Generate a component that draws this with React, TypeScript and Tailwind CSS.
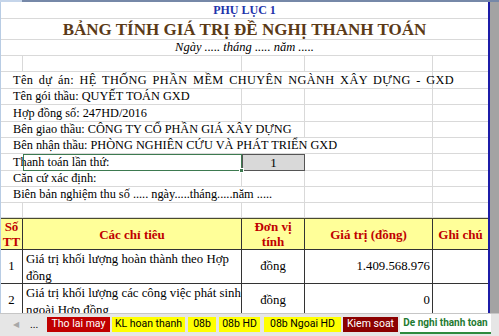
import React from 'react'

// column widths of the sheet: A, B, C, D, E
const COLS = 'grid grid-cols-[22px_219px_63px_128px_56px]'
const GRID = 'border-r border-b border-[#d9d9d9]'

type InfoRow = { text: string; span: number; h: string; wide?: boolean }

const INFO_ROWS: InfoRow[] = [
    { text: 'Tên dự án: HỆ THỐNG PHẦN MỀM CHUYÊN NGÀNH XÂY DỰNG - GXD', span: 4, h: 'h-[17px]', wide: true },
    { text: 'Tên gói thầu: QUYẾT TOÁN GXD', span: 2, h: 'h-[16px]' },
    { text: 'Hợp đồng số: 247HD/2016', span: 2, h: 'h-[17px]' },
    { text: 'Bên giao thầu: CÔNG TY CỔ PHẦN GIÁ XÂY DỰNG', span: 3, h: 'h-[16px]' },
    { text: 'Bên nhận thầu: PHÒNG NGHIÊN CỨU VÀ PHÁT TRIỂN GXD', span: 4, h: 'h-[16px]' },
]

const SPAN: Record<number, string> = {
    2: 'col-span-2',
    3: 'col-span-3',
    4: 'col-span-4',
    5: 'col-span-5',
}

// wrapped the same way the sheet wraps them
const ITEMS = [
    { no: '1', lines: ['Giá trị khối lượng hoàn thành theo Hợp', 'đồng'], value: '1.409.568.976' },
    { no: '2', lines: ['Giá trị khối lượng các công việc phát sinh', 'ngoài Hợp đồng'], value: '0' },
]

function TextRow({ text, span, h, wide }: InfoRow) {
    const rest = 5 - span
    return (
        <div className={`${COLS} ${h}`}>
            <div
                className={`${SPAN[span]} ${GRID} pl-[12px] flex items-center whitespace-nowrap leading-none ${
                    wide ? 'tracking-[0.4px] [word-spacing:2px]' : ''
                }`}
            >
                {text}
            </div>
            {Array.from({ length: rest }).map((_, i) => (
                <div key={i} className={GRID}></div>
            ))}
        </div>
    )
}

function EmptyRow({ h }: { h: string }) {
    return (
        <div className={`${COLS} ${h}`}>
            {[0, 1, 2, 3, 4].map(i => (
                <div key={i} className={GRID}></div>
            ))}
        </div>
    )
}

const TABS = [
    { label: 'Tho lai may', w: 'w-[63px]', ml: 'ml-0', cls: 'bg-[#c00000] text-white' },
    { label: 'KL hoan thanh', w: 'w-[73px]', ml: 'ml-[2px]', cls: 'bg-[#ffff00] text-black' },
    { label: '08b', w: 'w-[28px]', ml: 'ml-[3px]', cls: 'bg-[#ffff00] text-black' },
    { label: '08b HD', w: 'w-[41px]', ml: 'ml-[3px]', cls: 'bg-[#ffff00] text-black' },
    { label: '08b Ngoai HD', w: 'w-[77px]', ml: 'ml-[4px]', cls: 'bg-[#ffff00] text-black' },
    { label: 'Kiem soat', w: 'w-[55px]', ml: 'ml-[2px]', cls: 'bg-[#8b0000] text-white' },
]

export default function App() {
    return (
        <div className="w-[499px] h-[336px] overflow-hidden flex flex-col bg-white text-black font-['Liberation_Serif',serif] text-[12.3px]">
            {/* window top edge */}
            <div className="flex h-[2px] shrink-0">
                <div className="w-[22px] bg-[#c5d5ea]"></div>
                <div className="flex-1 bg-[#7688a8]"></div>
            </div>

            <div className="flex flex-1 min-h-0">
                {/* sheet */}
                <div className="w-[488px] overflow-hidden border-l border-[#b8cce4]">
                    {/* merged title rows */}
                    <div className="h-[17px] border-b border-[#d9d9d9] flex items-center justify-center font-bold text-[12px] text-[#2233aa] leading-none">
                        PHỤ LỤC 1
                    </div>
                    <div className="h-[21px] border-b border-[#d9d9d9] flex items-center justify-center font-bold text-[17px] text-[#5b3a17] leading-none">
                        BẢNG TÍNH GIÁ TRỊ ĐỀ NGHỊ THANH TOÁN
                    </div>
                    <div className="h-[16px] border-b border-[#d9d9d9] flex items-center justify-center italic text-[12.5px] leading-none">
                        Ngày ..... tháng ..... năm .....
                    </div>
                    <EmptyRow h="h-[16px]" />

                    {INFO_ROWS.map(r => (
                        <TextRow key={r.text} {...r} />
                    ))}

                    {/* payment number row */}
                    <div className={`${COLS} h-[17px]`}>
                        <div className="border-b border-[#d9d9d9] pl-[12px] flex items-center whitespace-nowrap leading-none overflow-visible">
                            Thanh toán lần thứ:
                        </div>
                        <div className="relative border border-[#3d7a50]">
                            <div className="absolute -right-[3px] -bottom-[3px] w-[5px] h-[5px] bg-[#3d7a50] border border-white"></div>
                        </div>
                        <div className="bg-[#d9d9d9] border border-[#555] flex items-center justify-center leading-none text-[13px]">
                            1
                        </div>
                        <div className={GRID}></div>
                        <div className={GRID}></div>
                    </div>

                    <TextRow text="Căn cứ xác định:" span={2} h="h-[16px]" />
                    <TextRow text="Biên bản nghiệm thu số ..... ngày.....tháng.....năm ....." span={3} h="h-[16px]" />
                    <EmptyRow h="h-[15px]" />

                    {/* table header */}
                    <div className={`${COLS} h-[32px] bg-[#ffff99] border-t border-[#4a4a30] font-bold text-[#c00000] text-center text-[13px] leading-[15px]`}>
                        <div className="border-r border-b border-[#333] flex items-center justify-center">Số<br />TT</div>
                        <div className="border-r border-b border-[#333] flex items-center justify-center">Các chỉ tiêu</div>
                        <div className="border-r border-b border-[#333] flex items-center justify-center">Đơn vị<br />tính</div>
                        <div className="border-r border-b border-[#333] flex items-center justify-center">Giá trị (đồng)</div>
                        <div className="border-r border-b border-[#333] flex items-center justify-center">Ghi chú</div>
                    </div>

                    {/* table rows */}
                    {ITEMS.map(row => (
                        <div key={row.no} className={`${COLS} h-[34px] text-[12.8px] leading-[17px]`}>
                            <div className="border-r border-b border-[#333] flex items-center justify-center">{row.no}</div>
                            <div className="border-r border-b border-[#333] pl-[3px] pt-[1px] whitespace-nowrap overflow-hidden">
                                {row.lines.map(l => (
                                    <div key={l}>{l}</div>
                                ))}
                            </div>
                            <div className="border-r border-b border-[#333] flex items-center justify-center">đồng</div>
                            <div className="border-r border-b border-[#333] flex items-center justify-end pr-[2px]">{row.value}</div>
                            <div className="border-r border-b border-[#333]"></div>
                        </div>
                    ))}
                </div>

                {/* window right edge */}
                <div className="w-[2px] bg-[#1c1ca8]"></div>
                <div className="flex-1 bg-[#a3a3a3]"></div>
            </div>

            {/* sheet tabs */}
            <div className="h-[23px] shrink-0 bg-[#e6e6e6] border-t border-[#c6c6c6] flex items-start font-['Roboto','Liberation_Sans',sans-serif] text-[10.5px] leading-none">
                <div className="w-[47px] h-full flex items-center pl-[13px] gap-[11px] text-[#a8a8a8]">
                    <span className="text-[8px]">◀</span>
                    <span className="text-black">...</span>
                </div>
                {TABS.map(t => (
                    <div
                        key={t.label}
                        className={`${t.w} ${t.ml} ${t.cls} h-[15px] mt-[3px] flex items-center justify-center whitespace-nowrap`}
                    >
                        {t.label}
                    </div>
                ))}
                <div className="w-[91px] ml-[2px] h-[20px] bg-white border-b-2 border-[#2e8b3e] text-[#1e7a30] font-bold text-[10px] flex items-center justify-center whitespace-nowrap">
                    De nghi thanh toan
                </div>
            </div>
        </div>
    )
}
